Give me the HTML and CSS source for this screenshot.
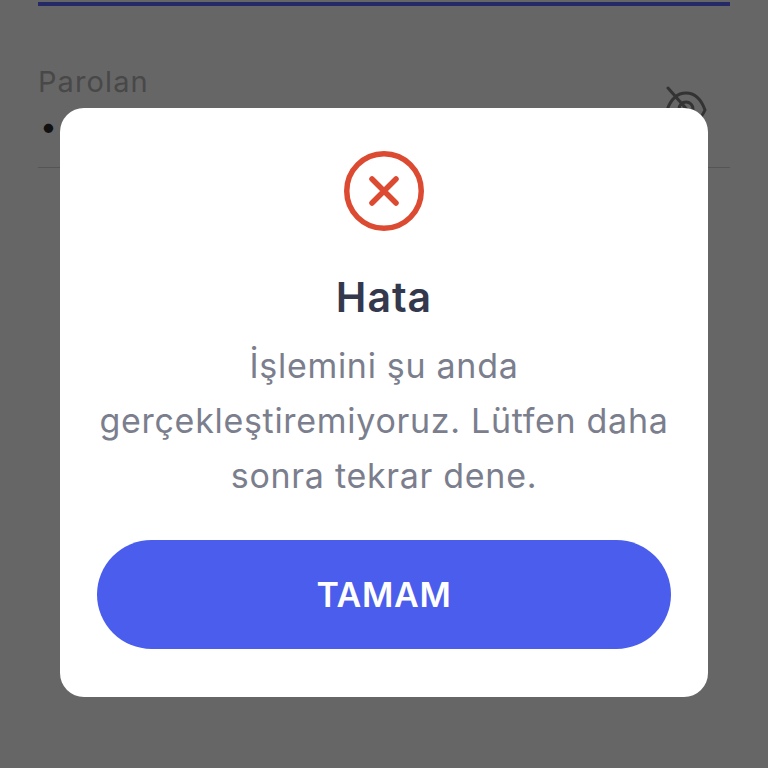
FILE: index.html
```html
<!DOCTYPE html>
<html lang="tr">
<head>
    <meta charset="UTF-8">
    <meta name="viewport" content="width=device-width, initial-scale=1.0">
    <title>Hata</title>
    <link rel="stylesheet" href="styles.css">
</head>
<body>
    <div class="ekran">
        <div class="ust-cizgi"></div>
        <div class="parola-alani">
            <div class="parola-sol">
                <div class="parola-etiket">Parolan</div>
                <div class="parola-deger">•</div>
            </div>
            <svg class="goz" width="44" height="40" viewBox="0 0 44 40" fill="none" stroke="#333" stroke-width="3" stroke-linecap="round">
                <path d="M3 24C7 13 13 7 22 7C31 7 37 13 41 24C37 33 31 38 22 38C13 38 7 33 3 24Z"/>
                <circle cx="22" cy="23" r="7"/>
                <path d="M4 2L34 36"/>
            </svg>
        </div>
    </div>

    <div class="perde">
        <div class="hata-kutu">
            <svg class="hata-ikon" width="80" height="80" viewBox="0 0 80 80" fill="none" stroke="#dc4a32" stroke-linecap="round">
                <circle cx="40" cy="40" r="37.250" stroke-width="5.500"/>
                <path d="M28 28L52 52M52 28L28 52" stroke-width="5.500"/>
            </svg>
            <h2 class="hata-baslik">Hata</h2>
            <p class="hata-metin">İşlemini şu anda gerçekleştiremiyoruz. Lütfen daha sonra tekrar dene.</p>
            <button class="hata-buton">TAMAM</button>
        </div>
    </div>
</body>
</html>
```

FILE: styles.css
```css
html, body {
    margin: 0;
    height: 100%;
}
body {
    font-family: Inter, "Noto Sans", sans-serif;
    background-color: #666666;
    overflow: hidden;
}
.ekran {
    padding: 2px 38px 0;
}
.ust-cizgi {
    height: 4px;
    background-color: #232a66;
}
.parola-alani {
    display: flex;
    justify-content: space-between;
    margin-top: 58px;
    padding: 0 22px 23px 0;
    border-bottom: 1px solid #555555;
}
.parola-etiket {
    font-size: 29px;
    line-height: 36px;
    letter-spacing: 1.1px;
    color: #484848;
}
.parola-deger {
    font-size: 30px;
    line-height: 36px;
    margin-top: 8px;
    color: #111111;
    padding-left: 2px;
}
.goz {
    margin-top: 22px;
}
.perde {
    position: absolute;
    top: 108px;
    left: 60px;
    right: 60px;
}
.hata-kutu {
    display: flex;
    flex-direction: column;
    align-items: center;
    box-sizing: border-box;
    height: 589px;
    padding: 43px 37px 48px;
    background-color: #ffffff;
    border-radius: 24px;
}
.hata-baslik {
    margin: 41px 0 0;
    font-size: 41px;
    line-height: 50px;
    font-weight: 600;
    letter-spacing: 1px;
    color: #33384d;
}
.hata-metin {
    margin: 16px 0 0;
    font-size: 34px;
    line-height: 55px;
    letter-spacing: 0.7px;
    text-align: center;
    color: #7b7e8d;
}
.hata-buton {
    width: 100%;
    height: 109px;
    margin-top: auto;
    border: none;
    border-radius: 55px;
    background-color: #4a5dec;
    color: #ffffff;
    font-family: inherit;
    font-size: 34px;
    font-weight: 600;
    letter-spacing: 0.7px;
}
```
